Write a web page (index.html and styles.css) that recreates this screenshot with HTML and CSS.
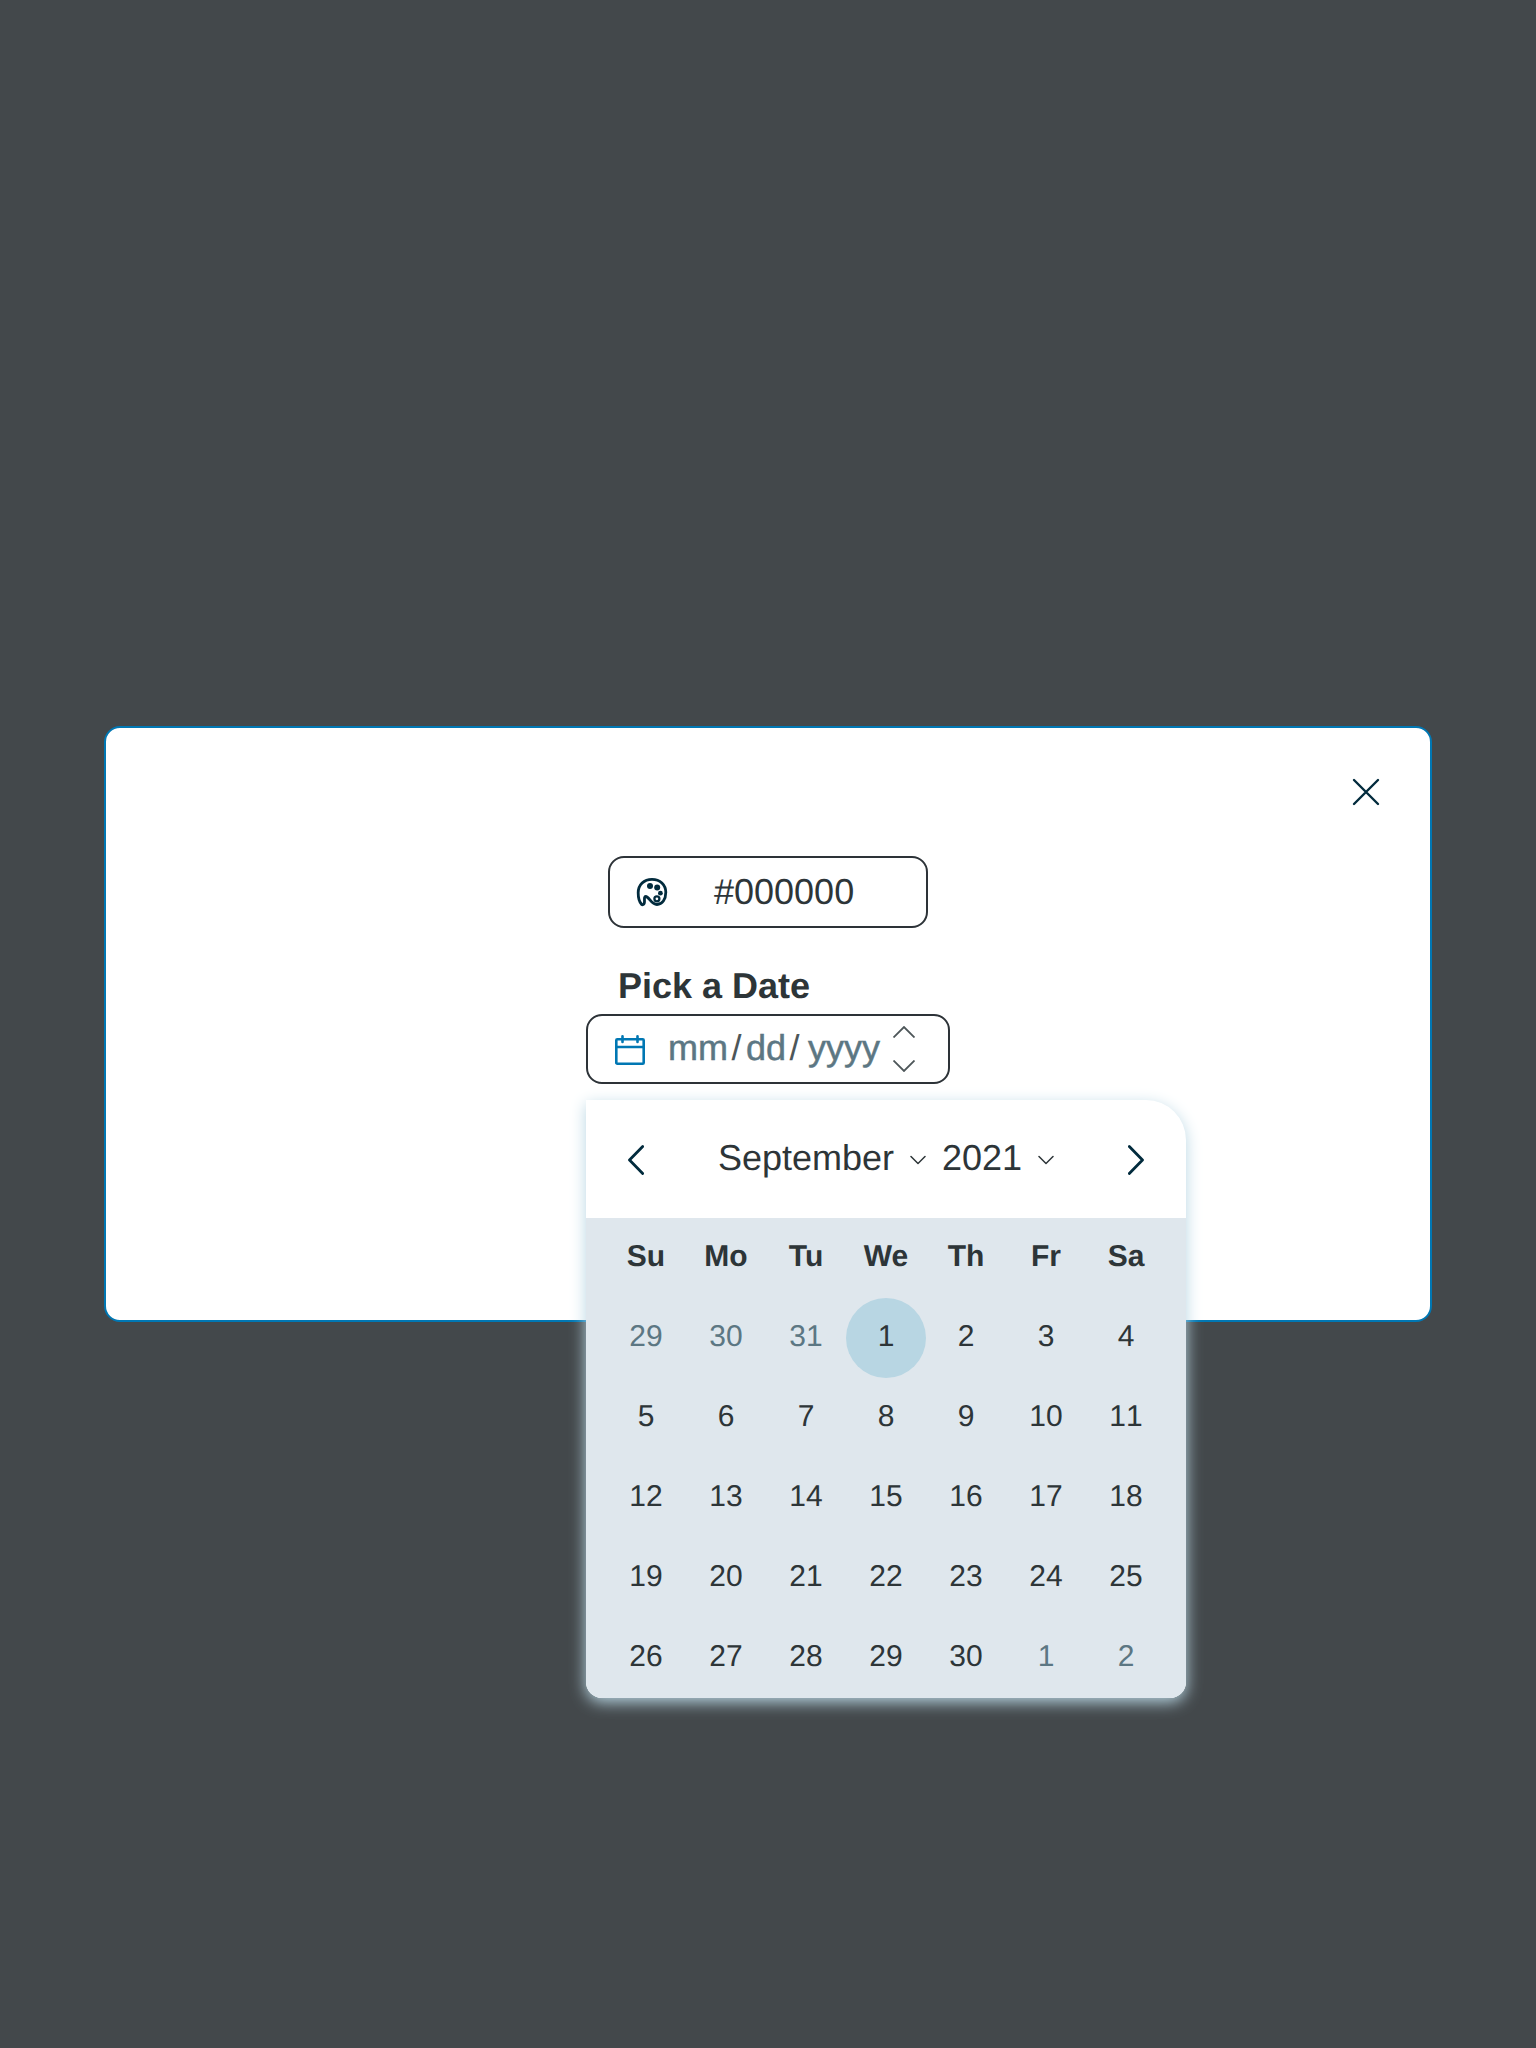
FILE: index.html
```html
<!DOCTYPE html>
<html lang="en">
<head>
<meta charset="utf-8">
<title>Pick a Date</title>
<link rel="stylesheet" href="styles.css">
</head>
<body>
<main class="modal">
  <button class="close" aria-label="Close"><svg width="28" height="28" viewBox="0 0 28 28"><path d="M2 2 26 26M26 2 2 26"/></svg></button>
  <div class="color-field">
    <svg class="palette" width="32" height="30" viewBox="0 0 32 30"><path d="M5.500 27.300C3.300 25 2.200 20 2.200 15.800 2.200 7.800 8 2.300 16 2.300S29.800 7.800 29.800 15.300c0 7-3.500 12.200-8.800 12.200-5.800 0-8-8-11.200-8-2.300 0-.8 4-1.500 6.500-.4 1.500-1.700 2.200-2.800 1.300Z"/><circle class="dot" cx="14" cy="9" r="3"/><circle class="dot" cx="21.200" cy="10.400" r="3"/><circle class="dot" cx="24.400" cy="16.200" r="2.400"/><circle class="ring" cx="20.900" cy="21.800" r="2.500"/></svg>
    <span class="color-value">#000000</span>
  </div>
  <section class="date-group">
    <div class="date-label">Pick a Date</div>
    <div class="date-field">
      <svg class="calendar-icon" width="30" height="30" viewBox="0 0 30 30"><rect x="1.300" y="4.300" width="27.400" height="24.400" rx="1"/><path d="M1.300 12H28.700M7.500 1.300V7M22.500 1.300V7"/></svg>
      <div class="segments"><span class="mm">mm</span><span class="slash">/</span><span class="dd">dd</span><span class="slash">/</span><span class="yyyy">yyyy</span></div>
      <div class="steppers"><svg width="22" height="12" viewBox="0 0 22 12"><path d="M.5 11.500 11 1 21.500 11.500"/></svg><svg width="22" height="12" viewBox="0 0 22 12"><path d="M.5.5 11 11 21.500.5"/></svg></div>
    </div>
    <div class="picker">
      <header class="picker-header">
        <svg class="arrow" width="16" height="30" viewBox="0 0 16 30"><path d="M14.700 1.500 1.500 15 14.700 28.500"/></svg>
        <div class="selects"><span class="month">September</span><svg class="chevron" width="16" height="10" viewBox="0 0 16 10"><path d="M1 1.500 8 8.500 15 1.500"/></svg><span class="year">2021</span><svg class="chevron" width="16" height="10" viewBox="0 0 16 10"><path d="M1 1.500 8 8.500 15 1.500"/></svg></div>
        <svg class="arrow" width="16" height="30" viewBox="0 0 16 30"><path d="M1.300 1.500 14.500 15 1.300 28.500"/></svg>
      </header>
      <div class="days">
        <b>Su</b><b>Mo</b><b>Tu</b><b>We</b><b>Th</b><b>Fr</b><b>Sa</b>
        <span class="muted">29</span><span class="muted">30</span><span class="muted">31</span><span class="today">1</span><span>2</span><span>3</span><span>4</span>
        <span>5</span><span>6</span><span>7</span><span>8</span><span>9</span><span>10</span><span>11</span>
        <span>12</span><span>13</span><span>14</span><span>15</span><span>16</span><span>17</span><span>18</span>
        <span>19</span><span>20</span><span>21</span><span>22</span><span>23</span><span>24</span><span>25</span>
        <span>26</span><span>27</span><span>28</span><span>29</span><span>30</span><span class="muted">1</span><span class="muted">2</span>
      </div>
    </div>
  </section>
</main>
</body>
</html>
```
FILE: styles.css
```css
* { box-sizing: border-box; }
body {
  margin: 0;
  height: 2048px;
  display: flex;
  align-items: center;
  justify-content: center;
  background: #43484b;
  color: #2d3538;
  font: 36px/40px "Liberation Sans", Arial, sans-serif;
  text-rendering: geometricPrecision;
}
svg { display: block; flex: none; fill: none; stroke: #022b3d; stroke-width: 2.800; stroke-linecap: round; stroke-linejoin: round; }
.modal {
  position: relative;
  width: 1328px;
  height: 596px;
  padding-top: 128px;
  display: flex;
  flex-direction: column;
  align-items: center;
  background: #fff;
  border: 2px solid #0077b3;
  border-radius: 16px;
}
.close {
  position: absolute;
  top: 50px;
  right: 50px;
  padding: 0;
  border: 0;
  background: none;
}
.close svg { stroke-width: 2.400; }
.color-field {
  width: 320px;
  height: 72px;
  display: flex;
  align-items: center;
  padding-left: 26px;
  border: 2px solid #2d3338;
  border-radius: 16px;
}
.color-value { margin-left: 46px; }
.palette { stroke-width: 2.800; }
.palette .dot { fill: #022b3d; stroke: none; }
.palette .ring { stroke-width: 2.300; }
.date-group { position: relative; width: 364px; padding-top: 38px; }
.date-label { height: 48px; padding: 0 32px; font-weight: 700; }
.date-field {
  width: 364px;
  height: 70px;
  display: flex;
  align-items: center;
  padding-left: 27px;
  border: 2px solid #2d3338;
  border-radius: 16px;
}
.calendar-icon { margin-top: 2px; stroke: #0077b3; stroke-width: 2.600; }
.segments { display: flex; width: 213px; margin-left: 23px; padding-bottom: 2px; color: #5c7783; }
.mm, .dd, .yyyy { -webkit-text-stroke: .5px #5c7783; }
.slash { color: #4d5659; margin: 0 4.500px 0 3.500px; }
.yyyy { margin-left: 4px; }
.steppers { display: flex; flex-direction: column; gap: 22px; margin-left: 12px; }
.steppers svg { stroke: #4d5659; stroke-width: 1.800; stroke-linecap: butt; stroke-linejoin: miter; }
.picker {
  position: absolute;
  top: 172px;
  left: 0;
  width: 600px;
  border-radius: 0 40px 16px 16px;
  overflow: hidden;
  background: #fff;
  box-shadow: 0 4px 16px #b8d6e3;
}
.picker-header {
  height: 118px;
  display: flex;
  align-items: center;
  justify-content: space-between;
  padding: 2px 42px 0;
}
.selects { display: flex; align-items: center; }
.month, .year { padding-bottom: 4px; }
.selects .chevron { margin-left: 16px; stroke: #2d3538; stroke-width: 1.500; }
.selects .year { margin-left: 16px; }
.days {
  display: grid;
  grid-template-columns: repeat(7, 80px);
  grid-auto-rows: 80px;
  justify-content: center;
  background: #dfe7ed;
  font-size: 30px;
}
.days b, .days span { display: flex; align-items: center; justify-content: center; padding-bottom: 2px; }
.days span { font-kerning: none; }
.days .muted { color: #5c7783; }
.days .today { background: #b8d6e3; border-radius: 50%; }
```
